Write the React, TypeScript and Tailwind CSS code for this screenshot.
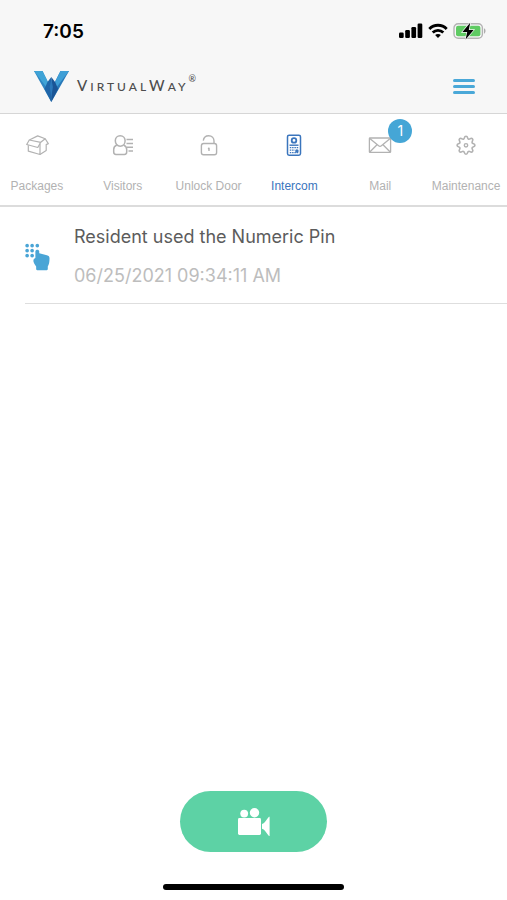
import React, { useState } from 'react';

interface IconProps {
    className?: string;
}

interface Tab {
    id: string;
    label: string;
    icon: React.FC<IconProps>;
    badge?: number;
}

interface ActivityEntry {
    id: number;
    title: string;
    date: string;
}

const PackageIcon: React.FC<IconProps> = ({ className }) => (
    <svg className={className} viewBox="0 0 24 24" fill="none" stroke="currentColor" strokeWidth="1.2" strokeLinejoin="round" aria-hidden="true">
        <path d="M4.300 6 12.700 1.900 20.200 4.700 15.700 8.300Z" />
        <path d="M4.300 6 1.700 10.500 12.800 13.500 15.700 8.300" />
        <path d="M3.300 11.200V17.200L15 20.500V9.800" />
        <path d="M15 20.500 21.200 16.500V10.600L23.300 9.600 20.200 4.700" />
    </svg>
);

const VisitorIcon: React.FC<IconProps> = ({ className }) => (
    <svg className={className} viewBox="0 0 24 24" fill="none" stroke="currentColor" strokeWidth="1.5" aria-hidden="true">
        <path d="M9.200 1.800c3 0 4.900 2.200 4.900 5s-1.900 5.400-4.900 5.400-4.900-2.600-4.900-5.400 1.900-5 4.900-5Z" />
        <path d="M5.800 11C3.600 12 2.700 13.500 2.700 15.500v2.600c0 1.700.9 2.400 2.300 2.400h8.400c1.400 0 2.300-.7 2.300-2.400v-2.600c0-2-.9-3.500-3.100-4.500" />
        <path d="M15.500 5.600H22M15.500 9.400H22M16 13.200h6M17.500 17H22" />
    </svg>
);

const UnlockIcon: React.FC<IconProps> = ({ className }) => (
    <svg className={className} viewBox="0 0 24 24" fill="none" stroke="currentColor" strokeWidth="1.400" aria-hidden="true">
        <rect x="4.400" y="9.500" width="15.200" height="11.300" rx="2.200" />
        <path d="M6.300 6.600C6.700 3.500 8.700 1.700 11.700 1.700c3.200 0 5.300 2.200 5.300 5.200v2.600" />
        <circle cx="11.800" cy="14.600" r="1" fill="currentColor" stroke="none" />
        <path d="M12 15v2" />
    </svg>
);

const IntercomIcon: React.FC<IconProps> = ({ className }) => (
    <svg className={className} viewBox="0 0 24 24" fill="none" stroke="currentColor" strokeWidth="1.500" aria-hidden="true">
        <rect x="5.500" y="1.200" width="13" height="20" rx="1.600" />
        <circle cx="12" cy="6.400" r="2.300" strokeWidth="1.800" />
        <path d="M7.500 11.200h9" strokeWidth="1.400" />
        <path d="M7.800 13.700h8.400M7.800 16.200h5M7.800 18.700h8.400" strokeWidth="1.300" strokeDasharray="1.500 .8" />
        <circle cx="14.900" cy="17" r="1.800" fill="currentColor" stroke="none" />
    </svg>
);

const MailIcon: React.FC<IconProps> = ({ className }) => (
    <svg className={className} viewBox="0 0 24 24" fill="none" stroke="currentColor" strokeWidth="1.300" strokeLinejoin="round" aria-hidden="true">
        <rect x="1.400" y="4" width="21.200" height="14.400" rx=".6" />
        <path d="m1.800 4.400 8.800 7.400c.9.700 1.900.7 2.800 0l8.800-7.400M1.800 18l7.200-7.300M22.200 18 15 10.700" />
    </svg>
);

const GearIcon: React.FC<IconProps> = ({ className }) => (
    <svg className={className} viewBox="0 0 24 24" fill="none" stroke="currentColor" strokeWidth="1.400" strokeLinejoin="round" aria-hidden="true">
        <path d="M10.500 4.200C11 2.100 13 2.100 13.500 4.200c.2.900 1.100 1.200 1.900.7 1.900-1.200 3.300.2 2.100 2.100-.5.800-.2 1.700.7 1.900 2.100.5 2.100 2.500 0 3-.9.200-1.200 1.100-.7 1.900 1.200 1.900-.2 3.300-2.100 2.100-.8-.5-1.700-.2-1.900.7-.5 2.100-2.500 2.100-3 0-.2-.9-1.100-1.200-1.900-.7-1.900 1.200-3.300-.2-2.100-2.100.5-.8.200-1.700-.7-1.900-2.100-.5-2.100-2.500 0-3 .9-.2 1.200-1.100.7-1.900-1.200-1.900.2-3.300 2.100-2.100.8.5 1.700.2 1.900-.7Z" transform="translate(-1.800 -.7) scale(1.150)" />
        <circle cx="12" cy="11.300" r="1.700" />
    </svg>
);

const BrandMark: React.FC<IconProps> = ({ className }) => (
    <svg className={className} viewBox="0 0 35 31" aria-hidden="true">
        <path d="M0 0h8.500l8.800 18v13Z" fill="#2f86c2" />
        <path d="M0 0h8.500l5.500 11-1 6Z" fill="#3fa3d6" />
        <path d="M35 0h-8.500L17.300 18v13Z" fill="#2878b8" />
        <path d="M35 0h-8.500L21 11l1 6Z" fill="#3f9fd6" />
        <path d="m13.500 11 3.800-5v25L10.500 18Z" fill="#1f65a8" />
        <path d="m21.100 11-3.800-5v25l6.800-13Z" fill="#1a5596" />
        <path d="m17.300 8 1.600 8-1.600 10-1.600-10Z" fill="#2a78ba" />
    </svg>
);

const KeypadHandIcon: React.FC<IconProps> = ({ className }) => (
    <svg className={className} viewBox="0 0 26 28" fill="currentColor" aria-hidden="true">
        <circle cx="2.200" cy="2.200" r="1.900" />
        <circle cx="7.400" cy="2.200" r="1.900" />
        <circle cx="12.800" cy="2.200" r="1.900" />
        <circle cx="2.200" cy="7.400" r="1.900" />
        <circle cx="7.400" cy="7.400" r="1.900" />
        <circle cx="2.200" cy="12.600" r="1.900" />
        <circle cx="7.400" cy="12.600" r="1.900" />
        <path d="M10.800 8c0-2.200 4-2.200 4 0v2l8 2.200c1.900.5 2.700 1.500 2.700 3.200 0 3.800-.4 6.400-1.800 8.400V26.600c0 .7-.4 1.100-1.100 1.100H12.700c-.7 0-1.100-.4-1.100-1.100v-2.800c-1.200-1.600-2.400-3.400-2.800-5.200-.3-1.800.6-3 2-3.600Z" />
    </svg>
);

const CameraIcon: React.FC<IconProps> = ({ className }) => (
    <svg className={className} viewBox="0 0 32 28" fill="currentColor" aria-hidden="true">
        <circle cx="6.200" cy="5.600" r="3.900" />
        <circle cx="16.500" cy="4.700" r="4.700" />
        <rect x="0" y="10" width="23" height="17" rx="1.400" />
        <path d="M24 16c3.500-1.200 4.500-5 7-7.200h.6v19.200H31c-2.500-2.200-3.500-6-7-7.200Z" />
    </svg>
);

const SignalIcon: React.FC<IconProps> = ({ className }) => (
    <svg className={className} viewBox="0 0 24 16" fill="currentColor" aria-hidden="true">
        <rect x="0" y="9.500" width="4.700" height="5.500" rx="1.200" />
        <rect x="6.200" y="7" width="4.700" height="8" rx="1.200" />
        <rect x="12.400" y="4" width="4.700" height="11" rx="1.200" />
        <rect x="18.600" y="0.500" width="4.700" height="14.500" rx="1.200" />
    </svg>
);

const WifiIcon: React.FC<IconProps> = ({ className }) => (
    <svg className={className} viewBox="0 0 20 16" fill="none" stroke="currentColor" strokeWidth="2.800" aria-hidden="true">
        <path d="M1.300 6C6.100 1 13.900 1 18.700 6" />
        <path d="M4.700 9.600c3-3 7.600-3 10.600 0" />
        <path d="m10 15-2.900-2.900c1.600-1.400 4.200-1.400 5.800 0Z" fill="currentColor" stroke="none" />
    </svg>
);

const BatteryIcon: React.FC<IconProps> = ({ className }) => (
    <svg className={className} viewBox="0 0 34 18" aria-hidden="true">
        <rect x="1" y="1.700" width="28.400" height="14.600" rx="4.200" fill="none" stroke="#b3b3b3" strokeWidth="1.400" />
        <rect x="3" y="3.700" width="24.400" height="10.600" rx="2" fill="#5fcb63" />
        <path d="M31 6.300c2 .8 2 4.600 0 5.400Z" fill="#adadad" />
        <path d="M17.200.8 9.400 10h4.800l-1.600 7.400L20.600 8h-4.800Z" fill="#000" stroke="#f7f7f7" strokeWidth="1.400" paintOrder="stroke" />
    </svg>
);

const TABS: Tab[] = [
    { id: 'packages', label: 'Packages', icon: PackageIcon },
    { id: 'visitors', label: 'Visitors', icon: VisitorIcon },
    { id: 'unlock', label: 'Unlock Door', icon: UnlockIcon },
    { id: 'intercom', label: 'Intercom', icon: IntercomIcon },
    { id: 'mail', label: 'Mail', icon: MailIcon, badge: 1 },
    { id: 'maintenance', label: 'Maintenance', icon: GearIcon }
];

const ENTRIES: ActivityEntry[] = [
    { id: 1, title: 'Resident used the Numeric Pin', date: '06/25/2021 09:34:11 AM' }
];

const StatusBar: React.FC = () => (
    <div className="flex h-[62px] items-center justify-between pl-[43px] pr-5 text-black">
        <span className="pt-0.5 text-[19px] leading-6 font-semibold">7:05</span>
        <div className="flex items-center gap-[5px]">
            <SignalIcon className="h-4 w-6" />
            <WifiIcon className="h-4 w-5" />
            <BatteryIcon className="h-[18px] w-[34px]" />
        </div>
    </div>
);

const Header: React.FC = () => (
    <header className="border-b border-[#d6d6d6] bg-[#f7f7f7]">
        <StatusBar />
        <div className="flex h-[51px] items-center justify-between pr-8 pb-[3px] pl-[34px]">
            <div className="flex items-center gap-2">
                <BrandMark className="h-[31px] w-[35px]" />
                <span className="flex items-start font-['Lato',sans-serif] text-xs leading-5 font-medium text-[#4d4d4d]">
                    <span className="tracking-[3px]">
                        <span className="text-[15px] leading-5">V</span>IRTUAL
                        <span className="text-[15px] leading-5">W</span>AY
                    </span>
                    <span className="text-[9px] leading-2">®</span>
                </span>
            </div>
            <button type="button" aria-label="Open menu" className="flex w-[22px] flex-col gap-[3px]">
                <span className="h-[3px] rounded-full bg-[#4aa8d8]" />
                <span className="h-[3px] rounded-full bg-[#4aa8d8]" />
                <span className="h-[3px] rounded-full bg-[#4aa8d8]" />
            </button>
        </div>
    </header>
);

export default function App() {
    const [activeTab, setActiveTab] = useState('intercom');

    return (
        <div className="flex min-h-screen flex-col overflow-x-hidden bg-white font-['Inter',sans-serif]">
            <Header />

            <nav className="-mr-0.5 -ml-1.5 grid grid-cols-6 border-b-2 border-[#dcdcdc]">
                {TABS.map(({ id, label, icon: Icon, badge }) => (
                    <button
                        key={id}
                        type="button"
                        onClick={() => setActiveTab(id)}
                        className={`flex h-[91px] flex-col items-center gap-5 pt-5 font-['Liberation_Sans',sans-serif] ${activeTab === id ? 'text-[#3a75bd]' : 'text-[#b2b2b2]'}`}
                    >
                        <span className="relative">
                            <Icon className="size-6" />
                            {badge && (
                                <span className="absolute -top-[15px] left-5 flex size-6 items-center justify-center rounded-full bg-[#45a6d6] font-['Inter',sans-serif] text-sm leading-6 text-white">
                                    {badge}
                                </span>
                            )}
                        </span>
                        <span className="text-xs leading-4 whitespace-nowrap">{label}</span>
                    </button>
                ))}
            </nav>

            <main className="flex-1">
                <ul>
                    {ENTRIES.map(entry => (
                        <li key={entry.id} className="ml-[25px] flex items-center gap-6 border-b border-[#dedede] pt-[18px] pb-[15px]">
                            <KeypadHandIcon className="h-7 w-[25px] text-[#4aa5d6]" />
                            <div className="flex flex-col gap-[15px]">
                                <p className="text-lg leading-6 text-[#5c5c5c]">{entry.title}</p>
                                <p className="text-lg leading-6 text-[#bdbdbd]">{entry.date}</p>
                            </div>
                        </li>
                    ))}
                </ul>
            </main>

            <footer className="flex flex-col items-center gap-8 pb-2.5">
                <button
                    type="button"
                    aria-label="Start video call"
                    className="flex h-[61px] w-[147px] items-center justify-center rounded-full bg-[#5dd2a5] text-white"
                >
                    <CameraIcon className="h-7 w-8" />
                </button>
                <div className="h-1.5 w-[181px] rounded-full bg-black" />
            </footer>
        </div>
    );
}
